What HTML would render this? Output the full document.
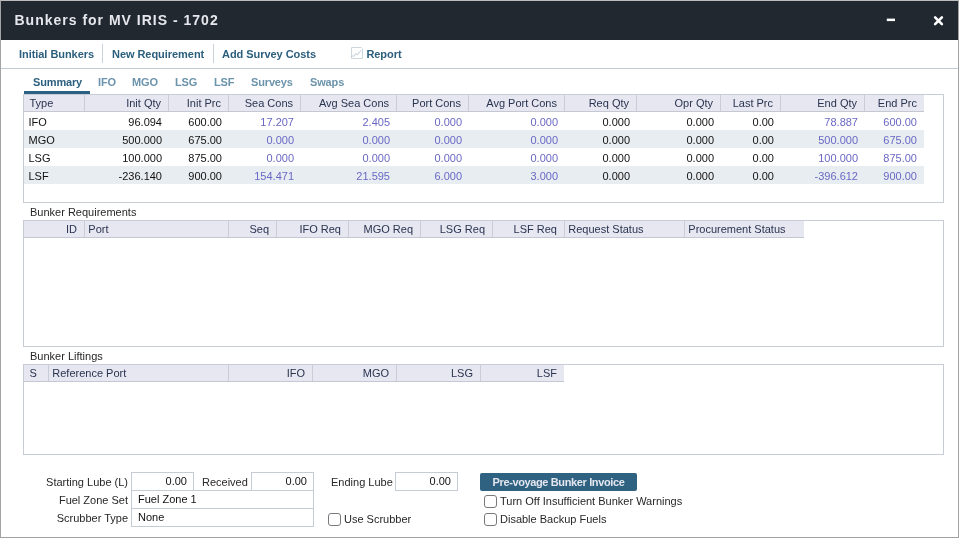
<!DOCTYPE html>
<html><head><meta charset="utf-8">
<style>
*{box-sizing:border-box;margin:0;padding:0}
html,body{width:959px;height:538px;overflow:hidden;background:#fff}
body{font-family:"Liberation Sans",sans-serif;font-size:11px;color:#222;position:relative}
.a{position:absolute;white-space:nowrap}
#win{position:absolute;left:0;top:0;width:959px;height:538px;border-left:1px solid #a2a4a8;border-top:1px solid #bdbdbd;border-right:1px solid #a0a1a5;border-bottom:1px solid #a0a1a5}
#title{position:absolute;left:1px;top:1px;width:957px;height:39px;background:#21282f}
#title .t{position:absolute;left:13.5px;top:11px;font-size:14px;font-weight:bold;letter-spacing:1px;color:#e6e7ec;line-height:16px}
.menu{font-weight:bold;color:#2b5f7d;font-size:11px;line-height:13px;letter-spacing:-0.05px}
.sep{position:absolute;width:1px;background:#c9d1da}
.tab{font-weight:bold;color:#6b93ab;font-size:11px;line-height:13px;letter-spacing:-0.15px}
.frame{position:absolute;border:1px solid #c7ccd6;background:#fff}
.hdr{position:absolute;left:0;top:0;height:17px;background:#e6e7f0;border-bottom:1px solid #c3c8d3}
.hc{position:absolute;top:0;height:16px;border-right:1px solid #c9cdd8;line-height:16px;color:#2a3450;padding:0 7px 0 5.5px}
.r{text-align:right}
.row{position:absolute;left:0;height:18px}
.alt{background:#e8edf1}
.dc{position:absolute;top:0;height:18px;line-height:18px;color:#111;padding:1px 7px 0 4.5px}
.b{color:#6a68c4}
.lbl{color:#272727;font-size:11px;line-height:13px}
.inp{position:absolute;border:1px solid #c5ccd6;background:#fff;line-height:16px;color:#111;font-size:11px}
.cb{position:absolute;width:13px;height:13px;border:1px solid #77797c;border-radius:3px;background:#fff}
</style></head><body><div id="wrap" style="position:absolute;left:0;top:0;width:959px;height:538px;will-change:transform">
<div id="win"></div>
<div id="title"><div class="t">Bunkers for MV IRIS - 1702</div>
  <svg class="a" style="left:885px;top:12px" width="12" height="12" viewBox="0 0 12 12"><rect x="0.8" y="5.6" width="8.2" height="2.5" fill="#fff"/></svg>
  <svg class="a" style="left:932px;top:14px" width="12" height="12" viewBox="0 0 12 12"><path d="M2.1 2.3 L8.9 9.1 M8.9 2.3 L2.1 9.1" stroke="#fff" stroke-width="2.6" stroke-linecap="round"/></svg>
</div>

<!-- menu -->
<div class="a menu" style="left:19px;top:48px">Initial Bunkers</div>
<div class="sep" style="left:102px;top:44px;height:19px"></div>
<div class="a menu" style="left:112px;top:48px">New Requirement</div>
<div class="sep" style="left:213px;top:44px;height:19px"></div>
<div class="a menu" style="left:222px;top:48px">Add Survey Costs</div>
<svg class="a" style="left:351px;top:47px" width="12" height="12" viewBox="0 0 12 12"><path d="M0.5 11.5 L0.5 0.5 L10.5 0.5 M11.5 1.5 L11.5 11.5 L0.5 11.5" fill="none" stroke="#cbd6de"/><path d="M0.5 9.8 L1.5 8.7 L2.7 9.5 L4.6 6.6 L6.3 7.9 L10.2 3.2" fill="none" stroke="#b3c4d0" stroke-width="0.9"/></svg>
<div class="a menu" style="left:366.4px;top:48px">Report</div>
<div class="a" style="left:1px;top:68px;width:957px;height:1px;background:#c0cad2"></div>

<!-- tabs -->
<div class="a tab" style="left:33px;top:76px;color:#2b5f7d">Summary</div>
<div class="a" style="left:24px;top:91px;width:66px;height:3px;background:#2b6283"></div>
<div class="a tab" style="left:98px;top:76px">IFO</div>
<div class="a tab" style="left:132px;top:76px">MGO</div>
<div class="a tab" style="left:175px;top:76px">LSG</div>
<div class="a tab" style="left:214px;top:76px">LSF</div>
<div class="a tab" style="left:251px;top:76px">Surveys</div>
<div class="a tab" style="left:310px;top:76px">Swaps</div>

<!-- summary table -->
<div class="frame" style="left:23px;top:94px;width:921px;height:109px">
 <div class="hdr" style="width:900px">
  <div class="hc" style="left:0;width:61px">Type</div>
  <div class="hc r" style="left:61px;width:84px">Init Qty</div>
  <div class="hc r" style="left:145px;width:60px">Init Prc</div>
  <div class="hc r" style="left:205px;width:72px">Sea Cons</div>
  <div class="hc r" style="left:277px;width:96px">Avg Sea Cons</div>
  <div class="hc r" style="left:373px;width:72px">Port Cons</div>
  <div class="hc r" style="left:445px;width:96px">Avg Port Cons</div>
  <div class="hc r" style="left:541px;width:72px">Req Qty</div>
  <div class="hc r" style="left:613px;width:84px">Opr Qty</div>
  <div class="hc r" style="left:697px;width:60px">Last Prc</div>
  <div class="hc r" style="left:757px;width:84px">End Qty</div>
  <div class="hc r" style="left:841px;width:59px;border-right:0">End Prc</div>
 </div>
 <div class="row" style="top:17px;width:900px">
  <div class="dc" style="left:0;width:61px">IFO</div>
  <div class="dc r" style="left:61px;width:84px">96.094</div>
  <div class="dc r" style="left:145px;width:60px">600.00</div>
  <div class="dc r b" style="left:205px;width:72px">17.207</div>
  <div class="dc r b" style="left:277px;width:96px">2.405</div>
  <div class="dc r b" style="left:373px;width:72px">0.000</div>
  <div class="dc r b" style="left:445px;width:96px">0.000</div>
  <div class="dc r" style="left:541px;width:72px">0.000</div>
  <div class="dc r" style="left:613px;width:84px">0.000</div>
  <div class="dc r" style="left:697px;width:60px">0.00</div>
  <div class="dc r b" style="left:757px;width:84px">78.887</div>
  <div class="dc r b" style="left:841px;width:59px">600.00</div>
 </div>
 <div class="row alt" style="top:35px;width:900px">
  <div class="dc" style="left:0;width:61px">MGO</div>
  <div class="dc r" style="left:61px;width:84px">500.000</div>
  <div class="dc r" style="left:145px;width:60px">675.00</div>
  <div class="dc r b" style="left:205px;width:72px">0.000</div>
  <div class="dc r b" style="left:277px;width:96px">0.000</div>
  <div class="dc r b" style="left:373px;width:72px">0.000</div>
  <div class="dc r b" style="left:445px;width:96px">0.000</div>
  <div class="dc r" style="left:541px;width:72px">0.000</div>
  <div class="dc r" style="left:613px;width:84px">0.000</div>
  <div class="dc r" style="left:697px;width:60px">0.00</div>
  <div class="dc r b" style="left:757px;width:84px">500.000</div>
  <div class="dc r b" style="left:841px;width:59px">675.00</div>
 </div>
 <div class="row" style="top:53px;width:900px">
  <div class="dc" style="left:0;width:61px">LSG</div>
  <div class="dc r" style="left:61px;width:84px">100.000</div>
  <div class="dc r" style="left:145px;width:60px">875.00</div>
  <div class="dc r b" style="left:205px;width:72px">0.000</div>
  <div class="dc r b" style="left:277px;width:96px">0.000</div>
  <div class="dc r b" style="left:373px;width:72px">0.000</div>
  <div class="dc r b" style="left:445px;width:96px">0.000</div>
  <div class="dc r" style="left:541px;width:72px">0.000</div>
  <div class="dc r" style="left:613px;width:84px">0.000</div>
  <div class="dc r" style="left:697px;width:60px">0.00</div>
  <div class="dc r b" style="left:757px;width:84px">100.000</div>
  <div class="dc r b" style="left:841px;width:59px">875.00</div>
 </div>
 <div class="row alt" style="top:71px;width:900px">
  <div class="dc" style="left:0;width:61px">LSF</div>
  <div class="dc r" style="left:61px;width:84px">-236.140</div>
  <div class="dc r" style="left:145px;width:60px">900.00</div>
  <div class="dc r b" style="left:205px;width:72px">154.471</div>
  <div class="dc r b" style="left:277px;width:96px">21.595</div>
  <div class="dc r b" style="left:373px;width:72px">6.000</div>
  <div class="dc r b" style="left:445px;width:96px">3.000</div>
  <div class="dc r" style="left:541px;width:72px">0.000</div>
  <div class="dc r" style="left:613px;width:84px">0.000</div>
  <div class="dc r" style="left:697px;width:60px">0.00</div>
  <div class="dc r b" style="left:757px;width:84px">-396.612</div>
  <div class="dc r b" style="left:841px;width:59px">900.00</div>
 </div>
</div>

<!-- bunker requirements -->
<div class="a lbl" style="left:30px;top:206px">Bunker Requirements</div>
<div class="frame" style="left:23px;top:220px;width:921px;height:127px">
 <div class="hdr" style="width:780px">
  <div class="hc r" style="left:0;width:61px">ID</div>
  <div class="hc" style="left:61px;width:144px;padding-left:3.3px">Port</div>
  <div class="hc r" style="left:205px;width:48px">Seq</div>
  <div class="hc r" style="left:253px;width:72px">IFO Req</div>
  <div class="hc r" style="left:325px;width:72px">MGO Req</div>
  <div class="hc r" style="left:397px;width:72px">LSG Req</div>
  <div class="hc r" style="left:469px;width:72px">LSF Req</div>
  <div class="hc" style="left:541px;width:120px;padding-left:3.3px">Request Status</div>
  <div class="hc" style="left:661px;width:119px;border-right:0;padding-left:3.3px">Procurement Status</div>
 </div>
</div>

<!-- bunker liftings -->
<div class="a lbl" style="left:30px;top:350px">Bunker Liftings</div>
<div class="frame" style="left:23px;top:364px;width:921px;height:91px">
 <div class="hdr" style="width:540px">
  <div class="hc" style="left:0;width:25px">S</div>
  <div class="hc" style="left:25px;width:180px;padding-left:3.3px">Reference Port</div>
  <div class="hc r" style="left:205px;width:84px">IFO</div>
  <div class="hc r" style="left:289px;width:84px">MGO</div>
  <div class="hc r" style="left:373px;width:84px">LSG</div>
  <div class="hc r" style="left:457px;width:83px;border-right:0">LSF</div>
 </div>
</div>

<!-- bottom form -->
<div class="a lbl" style="left:0;width:128px;text-align:right;top:476px">Starting Lube (L)</div>
<div class="inp r" style="left:131px;top:472px;width:63px;height:19px;padding-right:6px">0.00</div>
<div class="a lbl" style="left:202px;top:476px">Received</div>
<div class="inp r" style="left:251px;top:472px;width:63px;height:19px;padding-right:6px">0.00</div>
<div class="a lbl" style="left:331px;top:476px">Ending Lube</div>
<div class="inp r" style="left:395px;top:472px;width:63px;height:19px;padding-right:6px">0.00</div>
<div class="a lbl" style="left:0;width:128px;text-align:right;top:494px">Fuel Zone Set</div>
<div class="inp" style="left:131px;top:490px;width:183px;height:19px;padding-left:6px">Fuel Zone 1</div>
<div class="a lbl" style="left:0;width:128px;text-align:right;top:512px">Scrubber Type</div>
<div class="inp" style="left:131px;top:508px;width:183px;height:19px;padding-left:6px">None</div>
<div class="cb" style="left:328px;top:513px"></div>
<div class="a lbl" style="left:344px;top:513px">Use Scrubber</div>

<div class="a" style="left:480px;top:473px;width:157px;height:18px;background:#2f6180;border-radius:2px;color:#e4e7ef;font-weight:bold;letter-spacing:-0.37px;line-height:18px;padding-left:12.5px">Pre-voyage Bunker Invoice</div>
<div class="cb" style="left:484px;top:495px"></div>
<div class="a lbl" style="left:500px;top:495px">Turn Off Insufficient Bunker Warnings</div>
<div class="cb" style="left:484px;top:513px"></div>
<div class="a lbl" style="left:500px;top:513px">Disable Backup Fuels</div>
</div></body></html>
